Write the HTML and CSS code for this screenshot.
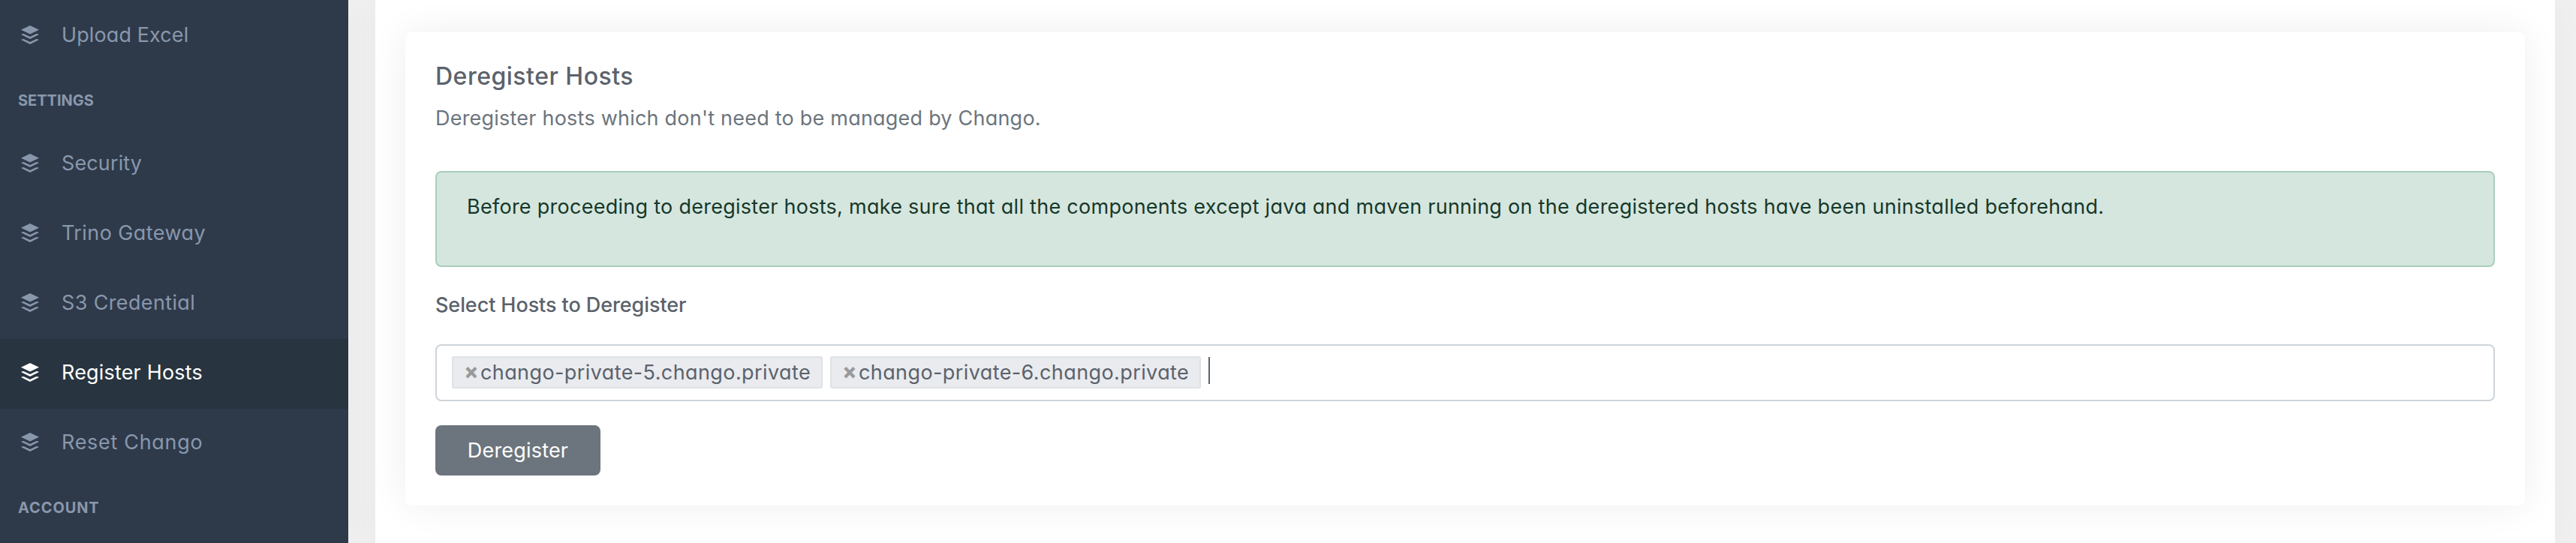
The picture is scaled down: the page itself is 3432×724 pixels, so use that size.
FILE: index.html
```html
<!DOCTYPE html>
<html lang="en">
<head>
<meta charset="utf-8">
<title>Chango</title>
<link rel="stylesheet" href="styles.css">
</head>
<body>
<svg class="sprite" aria-hidden="true"><symbol id="layers" viewBox="0 0 24 25"><path d="M12 0 24 5.7 12 11.4 0 5.7Z"/><path d="M0 12Q3 10.4 4.6 11.4L12 15 19.4 11.4Q21 10.4 24 12L12 18Z"/><path d="M0 19Q3 17.4 4.6 18.4L12 22 19.4 18.4Q21 17.4 24 19L12 25Z"/></symbol></svg>
<div class="app">
  <nav class="sidebar">
    <a class="item"><svg class="icon"><use href="#layers"/></svg><span class="t-upload">Upload Excel</span></a>
    <div class="heading"><span class="t-settings">SETTINGS</span></div>
    <a class="item"><svg class="icon"><use href="#layers"/></svg><span class="t-security">Security</span></a>
    <a class="item"><svg class="icon"><use href="#layers"/></svg><span class="t-trino">Trino Gateway</span></a>
    <a class="item"><svg class="icon"><use href="#layers"/></svg><span class="t-s3">S3 Credential</span></a>
    <a class="item active"><svg class="icon"><use href="#layers"/></svg><span class="t-register">Register Hosts</span></a>
    <a class="item"><svg class="icon"><use href="#layers"/></svg><span class="t-reset">Reset Chango</span></a>
    <div class="heading"><span class="t-account">ACCOUNT</span></div>
  </nav>
  <main class="panel">
    <section class="card">
      <h2 class="title"><span class="t-title">Deregister Hosts</span></h2>
      <p class="subtitle"><span class="t-sub">Deregister hosts which don't need to be managed by Chango.</span></p>
      <div class="alert"><span class="t-alert">Before proceeding to deregister hosts, make sure that all the components except java and maven running on the deregistered hosts have been uninstalled beforehand.</span></div>
      <div class="label"><span class="t-label">Select Hosts to Deregister</span></div>
      <div class="select">
        <span class="tag"><b class="remove">×</b><span class="t-tag">chango-private-5.chango.private</span></span>
        <span class="tag"><b class="remove">×</b><span class="t-tag">chango-private-6.chango.private</span></span>
        <i class="caret"></i>
      </div>
      <button class="button"><span class="t-button">Deregister</span></button>
    </section>
  </main>
</div>
</body>
</html>
```
FILE: styles.css
```css
* { box-sizing: border-box; }
body { margin: 0; background: #f0f0f0; color: #5b626b; font-family: Inter, "Open Sans", sans-serif; font-size: 27px; font-feature-settings: "cv11"; }
.sprite { display: none; }
.app { display: flex; width: 3432px; height: 724px; overflow: hidden; }
.sidebar { flex: none; width: 464px; height: 724px; padding-top: 2px; background: #2e3a4a; color: #8997ac; box-shadow: 0 0 40px rgba(0,0,0,.03); }
.item { display: flex; align-items: center; height: 93px; padding: 0 0 4px 28px; gap: 30px; line-height: 36px; white-space: nowrap; }
.icon { width: 24px; height: 25px; fill: currentColor; }
.active { background: #28343f; color: #fff; }
.heading { height: 78px; padding: 27px 24px 0; font-size: 20px; line-height: 24px; font-weight: 700; }
.panel { flex: none; width: 2904px; height: 724px; margin-left: 36px; padding: 43px 40px 50px; background: #fff; box-shadow: 0 0 40px rgba(0,0,0,.04); }
.card { height: 631px; padding: 40px; border-radius: 8px; background: #fff; box-shadow: 0 0 50px rgba(0,0,0,.07); }
.title { margin: 0; font-size: 32px; line-height: 37px; font-weight: 500; white-space: nowrap; }
.subtitle { margin: 20px 0 0; line-height: 36px; color: #6c757d; }
.alert { height: 128px; margin-top: 52px; padding: 28px 40px; border: 2px solid #a8cfbc; border-radius: 8px; background: #d5e6de; color: #17382a; line-height: 36px; white-space: nowrap; }
.label { margin-top: 33px; line-height: 36px; font-weight: 500; }
.select { display: flex; gap: 10px; height: 76px; margin-top: 34px; padding: 14px 20px; border: 2px solid #ced4da; border-radius: 8px; }
.tag { display: flex; align-items: center; width: 494px; height: 43px; padding-left: 16px; border: 2px solid #dee2e6; border-radius: 3px; background: #e9ebef; white-space: nowrap; }
.remove { width: 20px; color: #999; font: bold 27px/36px "Liberation Sans", sans-serif; -webkit-text-stroke: 1px #999; }
.caret { width: 2px; height: 36px; margin-top: 1px; background: #5b626b; }
.button { display: block; width: 220px; height: 67px; margin: 32px 0 0; padding: 0; border: 0; border-radius: 8px; background: #6c757d; color: #fff; font: inherit; font-feature-settings: inherit; }
.t-upload { letter-spacing: .1px; }
.t-security { letter-spacing: .12px; }
.t-trino { letter-spacing: .42px; }
.t-s3 { letter-spacing: .36px; }
.t-register { letter-spacing: .17px; }
.t-reset { letter-spacing: .69px; }
.t-account { letter-spacing: .9px; }
.t-title { letter-spacing: .5px; }
.t-sub { letter-spacing: .22px; }
.t-alert { letter-spacing: .27px; }
.t-label { letter-spacing: -.08px; }
.t-tag { letter-spacing: .4px; }
.t-button { letter-spacing: .18px; }
```
